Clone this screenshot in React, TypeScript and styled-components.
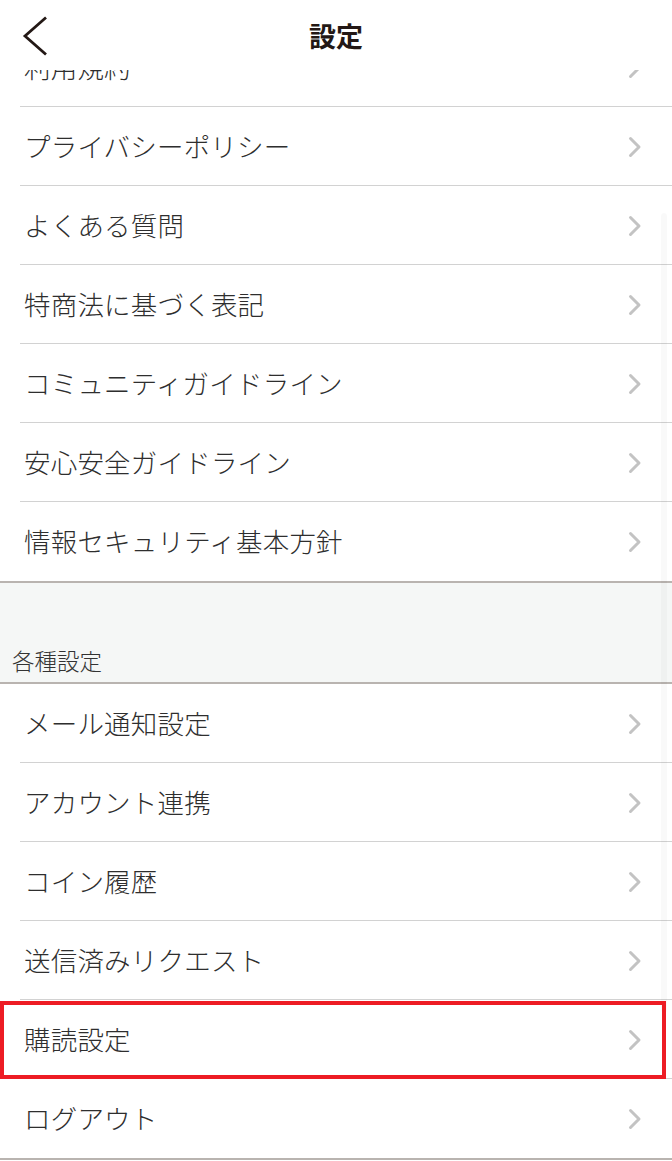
import React from 'react';
import styled, { createGlobalStyle } from 'styled-components';

const GlobalStyle = createGlobalStyle`
  html, body {
    margin: 0;
    padding: 0;
    background: #ffffff;
    overflow: hidden;
  }
  body {
    font-family: "Noto Sans CJK JP", "Noto Sans", sans-serif;
    color: #333333;
  }
`;

const Screen = styled.div`
  position: relative;
  width: 672px;
  height: 1161px;
  overflow: hidden;
  background: #ffffff;
`;

const Header = styled.header`
  position: absolute;
  top: 0;
  left: 0;
  right: 0;
  height: 70px;
  background: #ffffff;
  display: flex;
  align-items: center;
  justify-content: center;
  z-index: 2;
`;

const BackButton = styled.button`
  position: absolute;
  left: 17px;
  top: 14px;
  width: 34px;
  height: 44px;
  padding: 0;
  border: none;
  background: none;
  display: flex;
  align-items: center;
  justify-content: center;
`;

const Title = styled.h1`
  margin: 0;
  font-size: 27px;
  font-weight: 700;
  color: #231815;
  line-height: 1;
`;

const Content = styled.div`
  padding-top: 28px;
`;

const List = styled.ul`
  list-style: none;
  margin: 0;
  padding: 0;
`;

const Row = styled.li<{ $highlight?: boolean; $last?: boolean }>`
  position: relative;
  height: 79px;
  display: flex;
  align-items: center;
  justify-content: space-between;
  padding: 0 30px 0 24px;
  box-sizing: border-box;

  &::after {
    content: '';
    position: absolute;
    left: 20px;
    right: 0;
    bottom: 0;
    height: 1px;
    background: ${({ $last }) => ($last ? 'transparent' : '#d2d2d2')};
  }

  ${({ $highlight }) =>
    $highlight &&
    `
    &::before {
      content: '';
      position: absolute;
      left: 0;
      top: 1px;
      width: 666px;
      height: 78px;
      border: 4px solid #ed1c24;
      box-sizing: border-box;
      z-index: 1;
    }
  `}
`;

const Label = styled.span`
  font-size: 26.5px;
  font-weight: 300;
  color: #2e2e2e;
  line-height: 1;
  letter-spacing: 0.2px;
`;

const SectionRule = styled.div`
  height: 2px;
  background: #b9b4b0;
`;

const SectionHeader = styled.div`
  height: 99px;
  background: #f5f7f6;
  display: flex;
  align-items: flex-end;
  padding: 0 0 11px 12px;
  box-sizing: border-box;
  font-size: 22.5px;
  font-weight: 300;
  color: #333333;
  line-height: 1;
`;

const ScrollIndicator = styled.div`
  position: absolute;
  right: 5px;
  top: 213px;
  width: 6px;
  height: 800px;
  border-radius: 3px;
  background: rgba(0, 0, 0, 0.025);
`;

const Chevron = () => (
  <svg width="14" height="22" viewBox="0 0 14 22">
    <path d="M2.5 2.5 L11 11 L2.5 19.5" fill="none" stroke="#c3c3c3" strokeWidth="3" strokeLinecap="round" strokeLinejoin="round" />
  </svg>
);

const BackIcon = () => (
  <svg width="30" height="40" viewBox="0 0 30 40">
    <path d="M27 1.5 L6 20 L27 38.5" fill="none" stroke="#231815" strokeWidth="2.8" strokeLinecap="butt" strokeLinejoin="miter" />
  </svg>
);

const infoItems = [
  '利用規約',
  'プライバシーポリシー',
  'よくある質問',
  '特商法に基づく表記',
  'コミュニティガイドライン',
  '安心安全ガイドライン',
  '情報セキュリティ基本方針',
];

const settingItems = [
  'メール通知設定',
  'アカウント連携',
  'コイン履歴',
  '送信済みリクエスト',
  '購読設定',
  'ログアウト',
];

export default function App() {
  return (
    <Screen>
      <GlobalStyle />
      <Header>
        <BackButton aria-label="戻る">
          <BackIcon />
        </BackButton>
        <Title>設定</Title>
      </Header>
      <Content>
        <List>
          {infoItems.map((item, i) => (
            <Row key={item} $last={i === infoItems.length - 1}>
              <Label>{item}</Label>
              <Chevron />
            </Row>
          ))}
        </List>
        <SectionRule />
        <SectionHeader>各種設定</SectionHeader>
        <SectionRule />
        <List>
          {settingItems.map((item, i) => (
            <Row
              key={item}
              $highlight={item === '購読設定'}
              $last={i === settingItems.length - 1}
            >
              <Label>{item}</Label>
              <Chevron />
            </Row>
          ))}
        </List>
        <SectionRule />
      </Content>
      <ScrollIndicator />
    </Screen>
  );
}
